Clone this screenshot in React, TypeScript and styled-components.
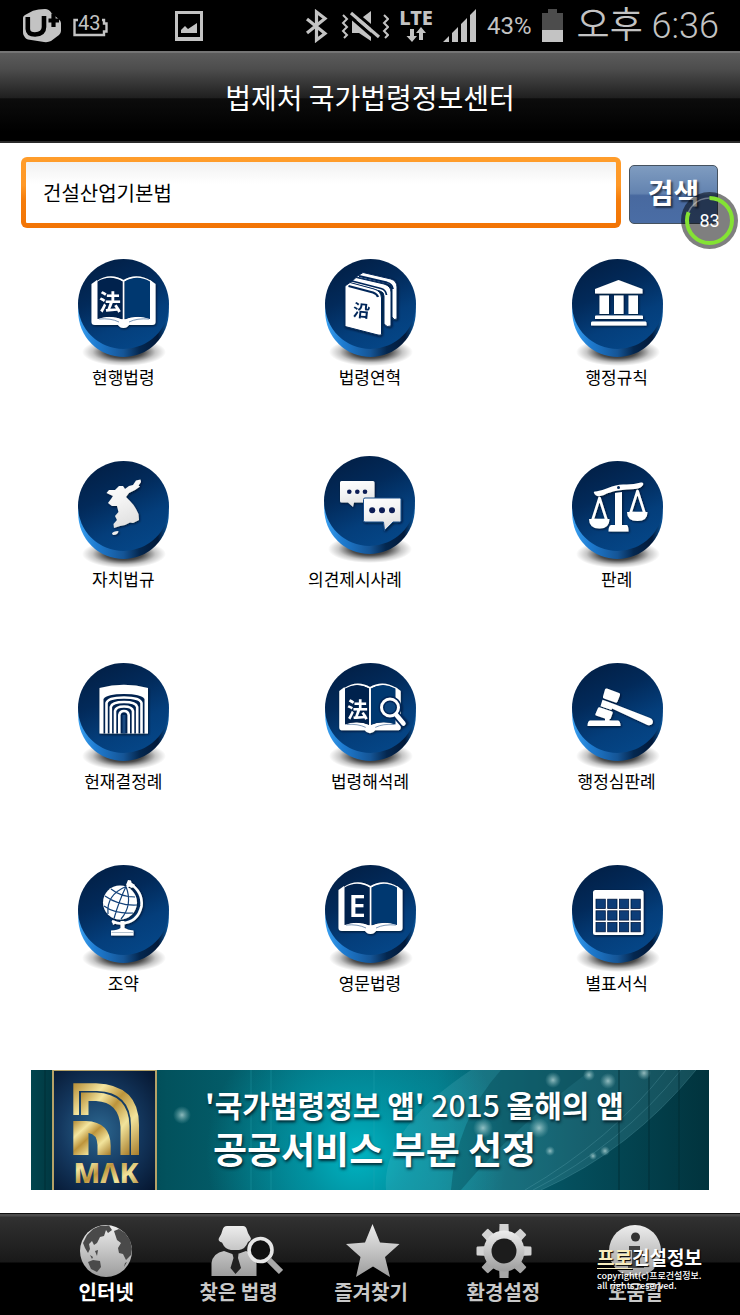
import React from 'react';
import styled, { createGlobalStyle } from 'styled-components';

const KR = '"Noto Sans CJK KR", sans-serif';

const GlobalStyle = createGlobalStyle`
  *, *::before, *::after { box-sizing: border-box; }
  body { margin: 0; background: #fff; font-family: ${KR}; color: #000; }
  button, input { font-family: inherit; }
  h1, ul, p { margin: 0; padding: 0; }
  ul { list-style: none; }
  svg { display: block; }
`;

const Page = styled.div`
  display: flex;
  flex-direction: column;
  min-height: 100vh;
`;

/* ---------- status bar ---------- */

const StatusBar = styled.div`
  display: flex;
  align-items: center;
  justify-content: space-between;
  height: 51px;
  padding: 0 21px 0 22px;
  background: #000;
  color: #c3c3c3;
`;

const StatusGroup = styled.div<{ $gap: number }>`
  display: flex;
  align-items: center;
  gap: ${(p) => p.$gap}px;
`;

const NetworkType = styled.div`
  display: flex;
  flex-direction: column;
  align-items: center;
  font: 800 20px/18px "Noto Sans", sans-serif;
`;

const StatusText = styled.span<{ $size: number }>`
  font-family: Roboto, ${KR};
  font-size: ${(p) => p.$size}px;
  font-weight: 400;
  line-height: 50px;
  white-space: nowrap;
`;

const Clock = styled(StatusText)`
  padding-left: 4px;
  font-weight: 350;
`;

/* ---------- title and search ---------- */

const TitleBar = styled.header`
  display: flex;
  align-items: center;
  justify-content: center;
  height: 92px;
  border-top: 2px solid #757575;
  border-bottom: 2px solid #2a2a2a;
  background: linear-gradient(#5b5b5b 0%, #4d4d4d 18%, #1f1f1f 51%, #0c0c0c 52%, #000 90%);
`;

const Title = styled.h1`
  color: #fff;
  font-size: 28px;
  line-height: 40px;
  font-weight: 400;
`;

const Main = styled.main`
  flex: 1;
  padding-bottom: 22px;
`;

const SearchForm = styled.form`
  position: relative;
  display: flex;
  align-items: center;
  gap: 8px;
  padding: 14px 22px 0 21px;
`;

const SearchInput = styled.input`
  flex: 1;
  min-width: 0;
  height: 71px;
  padding: 0 17px;
  border: 5px solid transparent;
  border-radius: 6px;
  outline: none;
  background:
    linear-gradient(#f1f1f1, #fff 36%) padding-box,
    linear-gradient(#ff9d2b, #ff9826 40%, #f57d0b 60%, #f27405) border-box;
  color: #000;
  font-size: 20px;
`;

const SearchButton = styled.button`
  width: 89px;
  height: 59px;
  margin-top: 3px;
  padding: 0 0 4px;
  border: 1px solid #45525f;
  border-radius: 5px;
  background: linear-gradient(#7f9cc0, #6383b0 48%, #48699f 52%, #4a6da5);
  color: #fff;
  font-size: 28px;
  font-weight: 700;
  line-height: 40px;
  text-shadow: 2px 2px 2px rgba(0, 0, 0, 0.55);
`;

const CleanerBadge = styled.div`
  position: absolute;
  top: 49px;
  right: 2px;
  width: 57px;
  height: 57px;
`;

/* ---------- menu ---------- */

const MenuGrid = styled.ul`
  display: grid;
  grid-template-columns: repeat(3, 1fr);
  row-gap: 70px;
  margin-top: 29px;
`;

const MenuItem = styled.li`
  display: flex;
  justify-content: center;
`;

const MenuButton = styled.button`
  display: flex;
  flex-direction: column;
  align-items: center;
  padding: 0;
  border: 0;
  background: none;
  color: #000;
`;

const MenuLabel = styled.span<{ $trailing?: boolean }>`
  padding-right: ${(p) => (p.$trailing ? '30px' : '0')};
  font-size: 17px;
  line-height: 24px;
  white-space: nowrap;
`;

/* ---------- banner ---------- */

const Banner = styled.a`
  position: relative;
  display: flex;
  align-items: center;
  height: 120px;
  margin: 75px 31px 0;
  padding-left: 21px;
  overflow: hidden;
  background:
    radial-gradient(ellipse 150px 150px at 48% 70%, #00b4c2 0%, rgba(0, 160, 175, 0.75) 35%, rgba(0, 120, 135, 0) 100%),
    linear-gradient(90deg, #01454e 0%, #01303a 5%, #02525d 20%, #046775 40%, #06707f 60%, #044e5c 80%, #01333d 100%);
  color: #fff;
  text-decoration: none;
`;

const BannerLights = styled.svg`
  position: absolute;
  top: 0;
  left: 0;
  width: 100%;
  height: 100%;
`;

const Award = styled.div`
  position: relative;
  flex: none;
  width: 105px;
  height: 120px;
  border: solid #b5a268;
  border-width: 1px 2px 0;
  background: radial-gradient(ellipse at 45% 50%, #2c6790 0%, #14385f 50%, #05152f 100%);
`;

const BannerText = styled.div`
  position: relative;
  padding: 0 0 8px 48px;
  font-weight: 700;
  white-space: nowrap;
  text-shadow: 1px 2px 3px rgba(0, 25, 35, 0.9);
`;

const BannerLine = styled.p<{ $large?: boolean }>`
  padding-left: ${(p) => (p.$large ? '8px' : '0')};
  font-size: ${(p) => (p.$large ? 37 : 30)}px;
  line-height: 44px;
`;

const Year = styled.span`
  font-weight: 500;
`;

/* ---------- tab bar ---------- */

const TabBar = styled.nav`
  position: relative;
  display: grid;
  grid-template-columns: repeat(5, 1fr);
  height: 102px;
  padding: 10px 38px 0 40px;
  border-top: 1px solid #111;
  background: linear-gradient(#4b4b4b 0, #4b4b4b 2px, #313131 3px, #191919 48px, #000 49px);
`;

const Tab = styled.a<{ $active?: boolean }>`
  display: flex;
  flex-direction: column;
  align-items: center;
  color: ${(p) => (p.$active ? '#fff' : '#c8c8c8')};
  font-size: 20px;
  font-weight: 700;
  line-height: 28px;
  text-decoration: none;
  white-space: nowrap;
`;

const Watermark = styled.div`
  position: absolute;
  top: 31px;
  right: 37px;
  width: 106px;
  color: #fff;
  white-space: nowrap;
`;

const WatermarkName = styled.p`
  padding-bottom: 2px;
  font-size: 19px;
  font-weight: 700;
  line-height: 24px;
  text-shadow: 1px 1px 1px #000;
`;

const WatermarkAccent = styled.span`
  color: #f8edbd;
  text-decoration: underline;
  text-decoration-thickness: 1px;
  text-underline-offset: 3px;
`;

const WatermarkNote = styled.p`
  font-size: 9px;
  font-weight: 500;
  line-height: 10px;
  text-shadow: 1px 1px 1px #000;
`;

/* ---------- drawings ---------- */

const LIGHT = '#c3c3c3';
const NAVY = '#03285a';

function Disc({ raised, children }: { raised?: boolean; children: React.ReactNode }) {
  return (
    <svg width="100" height="108" viewBox="0 0 100 108" overflow="visible" aria-hidden="true">
      <g transform={raised ? 'translate(-1 -5)' : undefined}>
        <ellipse cx="51" cy="95" rx="42" ry="14" fill="url(#discShadow)" />
        <ellipse cx="50.5" cy="54.5" rx="45.3" ry="45.5" fill="url(#discSide)" />
        <ellipse cx="50.5" cy="47" rx="45.5" ry="45" fill="url(#discFace)" />
      </g>
      <g filter="url(#glyphShadow)">{children}</g>
    </svg>
  );
}

function Book() {
  return (
    <>
      <path d="M24 25Q37 16 50.5 24V64Q37 58 24 63ZM50.5 24Q64 16 78 25V63Q64 58 50.5 64Z" fill="none" stroke="#fff" strokeWidth="2" />
      <path d="M24 23L18.5 27V65Q18.5 68 22 68H45Q47 71 50.5 71Q54 71 56 68H79Q82.5 68 82.5 65V27L77 23V62.500Q64 58 50.500 63.500Q37 58 24 62.500Z" fill="#fff" />
      <path d="M24.500 24.500Q37 17 49.500 24.500V62Q37 57.500 24.500 62Z" fill="#02214e" />
      <path d="M51.700 24.500Q64 17 77 24.500V62Q64 57.500 51.700 62Z" fill="#053770" />
      <path d="M26 62Q38 61 46 65M76 62Q64 61 56 65" fill="none" stroke="#5a7ca5" strokeWidth="0.800" />
    </>
  );
}

const glyphs: Record<string, React.ReactNode> = {
  law: (
    <>
      <Book />
      <text x="26" y="53" fontSize="22" fontWeight="700" fill="#fff">法</text>
    </>
  ),
  history: (
    <g stroke={NAVY} strokeWidth="1" strokeLinejoin="round">
      <path d="M36 20L43 15.500L71 22Q77 24 77 30V62Q74 64 72 60V32Q72 28 68 27Z" fill="#fff" />
      <path d="M30 26L36 20.500L64 27Q71 29 71 35V69Q67 71 64 67V39Q64 35 60 34Z" fill="#fff" />
      <path d="M32 24L61 31.500Q66 33 66.500 38M39 19L67 25.500Q72.500 27 73 32" stroke={NAVY} strokeWidth="1.800" fill="none" />
      <path d="M25 29L30 25.500L54 32Q61 34 61.500 41V77Q61 79 58 78L25 69.500Z" fill="#fff" />
      <path d="M28.500 29L53 35.500Q57 37 58 40" stroke={NAVY} strokeWidth="2.200" fill="none" />
      <text x="33" y="60" fontSize="17" fontWeight="700" fill={NAVY} stroke="none" transform="rotate(6 42 53)">沿</text>
    </g>
  ),
  bank: (
    <path fill="#fff" d="M51.500 23L75.500 32V36.500H28V32ZM32.500 38.500H42V57H32.500ZM47 38.500H56.500V57H47ZM61.500 38.500H71V57H61.500ZM29 58.500H75Q76 58.500 76 59.500V62H28V59.500Q28 58.500 29 58.500ZM25 64.500H78.500Q79.500 64.500 79.500 66V68.500H24V66Q24 64.500 25 64.500Z" />
  ),
  korea: (
    <>
      <path fill="url(#glyphFill)" d="M67.500 20.500L68 23L65.500 26.500L67 27.500L62 31L56 34L53 38L57 42L60.500 46L63 50L65.500 55L66 61L60 64L57 63.500L52 66L47 67L41 69L40.500 65L44 61L42 57L45.500 53L44 47L39 47L35 44L38 40L40 37L33.500 34L36 31L42 31L46 27L50 27L52 30L56 27L60 26L63 21.500Z" />
      <path fill="#eee" d="M39 74.500Q40 72 45.500 72Q45 76 40 76Z" />
    </>
  ),
  talk: (
    <>
      <path fill="url(#glyphFill)" d="M21.500 22H53Q54.500 22 54.500 23.500V43.500H34L33 48L28 43.500H21.500Q20 43.500 20 42V23.500Q20 22 21.500 22Z" />
      <path fill="url(#glyphFill)" stroke="#174c8a" strokeWidth="1" d="M45 39H79.500Q81 39 81 40.500V61.500Q81 63 79.500 63H73L64.500 71.500L63.500 63H45Q43.500 63 43.500 61.500V40.500Q43.500 39 45 39Z" />
      <g fill="#0a1d55">
        <circle cx="29.300" cy="32.700" r="2.300" />
        <circle cx="37.300" cy="32.700" r="2.300" />
        <circle cx="45" cy="32.700" r="2.300" />
        <circle cx="52.200" cy="51.300" r="3" />
        <circle cx="62" cy="51.300" r="3" />
        <circle cx="72" cy="51.300" r="3" />
      </g>
    </>
  ),
  scales: (
    <g transform="translate(1 0)">
      <path fill="#fff" d="M26 34Q25 32 28 32.500Q33 32 40 29Q49 25 57 25.500Q65 25.800 73 23.500Q76 23 75 26Q73 29.500 67 30Q58 30 50 31.500Q41 33 36 36Q28 39 26 34Z" />
      <circle cx="50.500" cy="28.500" r="1.500" fill={NAVY} />
      <path fill="#fff" d="M47 34L54 33V66H59Q60.500 67 60.500 72.500H40.500Q40.500 67 43 66H47Z" />
      <path fill="none" stroke="#fff" strokeWidth="2.600" strokeLinejoin="round" d="M31.500 39L24.500 61H38.500ZM69.500 32L62.500 54H76.500Z" />
      <path fill="#fff" d="M21 60H41.500Q41.500 69.500 31.500 69.500Q21 69.500 21 60ZM59 53H79.500Q79.500 62 69.500 62Q59 62 59 53Z" />
    </g>
  ),
  court: (
    <>
      <path fill="#fff" d="M26.500 27Q51 20.500 75 27V72.500H26.500Z" />
      <path fill="#02234f" d="M30.500 38Q34 33 51 33Q68 33 71.500 38V72.500H30.500Z" />
      <g fill="none" stroke="#fff" strokeWidth="2.600">
        <path d="M33.500 72.500V42Q35 36.500 51 36.500Q67 36.500 68.500 42V72.500" />
        <path d="M37.800 72.500V46Q39 41 51 41Q63 41 64.200 46V72.500" />
        <path d="M42 72.500V50Q43 45.500 51 45.500Q59 45.500 60 50V72.500" />
        <path d="M46.300 72.500V54Q47 50 51 50Q55 50 55.700 54V72.500" />
      </g>
      <path d="M51 72.500V54" stroke="#1d4b80" strokeWidth="3" />
    </>
  ),
  interpret: (
    <>
      <g transform="translate(1.500 4) scale(0.960 0.960)">
        <Book />
      </g>
      <text x="27" y="56" fontSize="21" fontWeight="700" fill="#fff">法</text>
      <path d="M70 47L85 64" stroke={NAVY} strokeWidth="8" />
      <circle cx="70" cy="46.500" r="8.500" fill="#0a447f" stroke={NAVY} strokeWidth="6" />
      <circle cx="70" cy="46.500" r="8.500" fill="none" stroke="#fff" strokeWidth="3" />
      <path d="M76 53.500L83.500 62.500" stroke="#fff" strokeWidth="4.500" strokeLinecap="round" />
    </>
  ),
  gavel: (
    <path transform="translate(1 0)" fill="#fff" d="M39 27.500L51 32Q52.500 32.700 52 34L49.500 40.500Q49 42 47.500 41.500L36 37.500Q34.500 37 35 35.500L37 28.500Q37.500 27 39 27.500ZM34.500 38.800L46 43L82 57Q86 59 84.500 62.500Q83 65 79.500 64L44 47.500L43.500 49L32.500 45.300ZM31.500 46.200L44 50.500Q45 51 44.700 52L42.500 58H41.500V59.500H50Q52.500 60 52.500 65H19.500Q19.500 60 22 59.500H37V57.500L28 54.500Q27 54 27.400 53L30 47Q30.500 46 31.500 46.200Z" />
  ),
  globe: (
    <>
      <path d="M57 20.500Q70 29 68.500 43Q65 59.500 48 60.500Q44 60.500 40 58.500M57 20.500L54 24" fill="none" stroke="#fff" strokeWidth="2.600" strokeLinecap="round" />
      <path d="M55 17L58 17.500L58.500 20L62 22L59 25L53 22ZM39 57L43 60L40 62Z" fill="#fff" />
      <circle cx="47" cy="39.500" r="17" fill="#fff" />
      <g fill="none" stroke="#12427a" strokeWidth="1.200">
        <path d="M53 23.500Q46 38 41 55.500M53 23.500Q33 32 35 51M53 23.500Q60 42 48 56M38 26Q48 34 62 34M32 33Q46 43 64 42M31 43Q42 51 60 50" />
      </g>
      <path fill="#fff" d="M47.500 58H51.500V65Q55 67 60.500 67.500V72.500H38V67.500Q45 67 47.500 65Z" />
      <path d="M38.500 69.500H60" stroke="#b5c2cf" strokeWidth="1" />
    </>
  ),
  english: (
    <>
      <Book />
      <text x="28.500" y="54" fontSize="31" fontWeight="600" fontFamily='"Noto Sans", sans-serif' fill="#fff">E</text>
    </>
  ),
  forms: (
    <g transform="translate(1 0)">
      <rect x="25" y="27" width="50.500" height="45" rx="2.500" fill="#fff" />
      {[36.2, 47.8, 59.5].map((y) =>
        [28, 39.7, 51.4, 63].map((x) => <rect key={`${x}-${y}`} x={x} y={y} width="9.300" height="9.300" fill="#0b3c78" stroke="#011a40" strokeWidth="0.800" />),
      )}
    </g>
  ),
};

function Defs() {
  return (
    <svg width="0" height="0" aria-hidden="true">
      <defs>
        <linearGradient id="discFace" x1="0.200" y1="0.050" x2="0.650" y2="1">
          <stop offset="0" stopColor="#022047" />
          <stop offset="0.350" stopColor="#022a5a" />
          <stop offset="0.700" stopColor="#043e7b" />
          <stop offset="1" stopColor="#054687" />
        </linearGradient>
        <linearGradient id="discSide">
          <stop offset="0" stopColor="#3aa0f0" />
          <stop offset="0.200" stopColor="#1e7bd0" />
          <stop offset="0.500" stopColor="#155596" />
          <stop offset="0.680" stopColor="#04274f" />
          <stop offset="0.880" stopColor="#021a3b" />
          <stop offset="1" stopColor="#0b59a0" />
        </linearGradient>
        <radialGradient id="discShadow">
          <stop offset="0" stopColor="#000" stopOpacity="0.950" />
          <stop offset="0.450" stopColor="#000" stopOpacity="0.700" />
          <stop offset="0.750" stopColor="#000" stopOpacity="0.220" />
          <stop offset="1" stopColor="#000" stopOpacity="0" />
        </radialGradient>
        <linearGradient id="glyphFill" x2="0.300" y2="1">
          <stop offset="0" stopColor="#fff" />
          <stop offset="0.500" stopColor="#f4f4f4" />
          <stop offset="1" stopColor="#e2e2e2" />
        </linearGradient>
        <filter id="glyphShadow" x="-20%" y="-20%" width="140%" height="140%">
          <feDropShadow dx="0.800" dy="1" stdDeviation="0.900" floodColor="#000c24" floodOpacity="0.800" />
        </filter>
        <linearGradient id="silver" x2="0" y2="1">
          <stop offset="0" stopColor="#ededed" />
          <stop offset="1" stopColor="#9c9c9c" />
        </linearGradient>
        <linearGradient id="gold" x2="1" y2="1">
          <stop offset="0" stopColor="#b58c35" />
          <stop offset="0.250" stopColor="#f4e6a0" />
          <stop offset="0.450" stopColor="#bd943b" />
          <stop offset="0.700" stopColor="#f2e49c" />
          <stop offset="1" stopColor="#a67c2b" />
        </linearGradient>
        <radialGradient id="spark">
          <stop offset="0" stopColor="#d8f0ee" stopOpacity="0.650" />
          <stop offset="1" stopColor="#9cc" stopOpacity="0" />
        </radialGradient>
      </defs>
    </svg>
  );
}

const CarrierIcon = () => (
  <svg width="40" height="34" viewBox="0 0 40 34" aria-hidden="true">
    <path fill={LIGHT} d="M1 9Q1 7 3 6L11 1.700Q16 0 23 0Q27 0 29.500 4L36 9.500Q39 12 39 14V22Q39 24 37 26L29 32Q26 33.500 22 33L6 30.500Q4 30 3 28.500L1.500 26Q1 25 1 23Z" />
    <path fill="none" stroke="#000" strokeWidth="4.600" d="M5.800 8V20Q6 25.500 13 25.500Q22 25 22 18V7" />
    <path stroke="#000" strokeWidth="4.200" d="M31.500 4.500V18M26.500 11.500H37" />
  </svg>
);

const SmallBattery = () => (
  <svg width="35" height="34" viewBox="0 -6 35 34" role="img" aria-label="43">
    <path fill="none" stroke={LIGHT} strokeWidth="2.400" d="M5 5H1.500V20H31V16.500H33.500V8.500H31V5H29" />
    <text x="5" y="15" fontSize="20" fontFamily="Roboto, sans-serif" fill={LIGHT}>43</text>
  </svg>
);

const PictureIcon = () => (
  <svg width="28" height="30" viewBox="0 0 28 30" aria-hidden="true">
    <path fill="none" stroke={LIGHT} strokeWidth="3" d="M1.500 1.500H26.500V27.500H1.500Z" />
    <path fill={LIGHT} d="M0 26H28V30H0ZM6 22V19L10 15L13 18L22 12V22Z" />
  </svg>
);

const BluetoothIcon = () => (
  <svg width="26" height="34" viewBox="0 0 26 34" aria-hidden="true">
    <path fill="none" stroke={LIGHT} strokeWidth="3.200" d="M2 10L20 24.500L11.500 31V3L20 9.500L2 24" />
  </svg>
);

const MuteIcon = () => (
  <svg width="48" height="34" viewBox="0 0 48 34" aria-hidden="true">
    <path fill={LIGHT} d="M11 11H18L30 2V32L18 24H11Z" />
    <path stroke="#000" strokeWidth="3" d="M6 5L36 31" />
    <path stroke="#000" strokeWidth="3" d="M13 2.500L41 26.500" />
    <path stroke={LIGHT} strokeWidth="3.200" d="M10 4L38 28" />
    <path fill="none" stroke={LIGHT} strokeWidth="2" d="M2 6L6 10L2 14L6 18L2 22L6 26L3 29M43 6L47 10L43 14L47 18L43 22L47 26L44 29" />
  </svg>
);

const DataArrows = () => (
  <svg width="22" height="15" viewBox="0 0 22 15" aria-hidden="true">
    <path fill={LIGHT} d="M5 2H9V9H12L7 15L1.500 9H5ZM16 0L21 6H18V13H14V6H11Z" />
  </svg>
);

const SignalIcon = () => (
  <svg width="34" height="34" viewBox="0 0 34 34" aria-hidden="true">
    <path fill={LIGHT} d="M0 33L6 27V33ZM9 33V24L15 18V33ZM18 33V15L24 9V33ZM27 33V6L33 0V33Z" />
  </svg>
);

const BatteryIcon = () => (
  <svg width="21" height="34" viewBox="0 0 21 34" aria-hidden="true">
    <path fill="#4c4c4c" d="M6 0H15V4H21V21H0V4H6Z" />
    <path fill={LIGHT} d="M0 21H21V33H0Z" />
  </svg>
);

const CleanerRing = () => (
  <svg width="57" height="57" viewBox="0 0 57 57" role="img" aria-label="83">
    <circle cx="28.500" cy="28.500" r="28.500" fill="#000" fillOpacity="0.500" />
    <circle cx="28.500" cy="28.500" r="22.500" fill="none" stroke="#fff" strokeOpacity="0.350" strokeWidth="1.500" />
    <circle cx="28.500" cy="28.500" r="22.500" fill="none" stroke="#84e333" strokeWidth="4" pathLength="100" strokeDasharray="81 100" transform="rotate(-90 28.500 28.500)" />
    <text x="28.500" y="35" textAnchor="middle" fontSize="18" fontFamily="Roboto, sans-serif" fill="#fff">83</text>
  </svg>
);

const AwardMark = () => (
  <svg width="101" height="119" viewBox="2 1 101 119" aria-hidden="true">
    <g fill="url(#gold)">
      <path d="M21.300 13.300H44Q87 15 87 55V85H79V56Q79 22 45 21H27V45H21.300Z" />
      <path d="M29 22.500H44Q77 24 77.500 56V85H68.500V57Q67 32 44 31H36.500V45H29Z" />
      <path d="M21.300 51H34Q58.700 52 58.700 76V85H45.500V75Q45 64 36.500 63V85H21.300Z" />
      <text x="54" y="113" textAnchor="middle" fontSize="28" fontWeight="800" fontFamily='"Noto Sans", sans-serif'>MΛK</text>
    </g>
  </svg>
);

const TabSvg = ({ children }: { children: React.ReactNode }) => (
  <svg width="88" height="54" viewBox="0 0 88 54" aria-hidden="true">
    {children}
  </svg>
);

const teeth = [0, 45, 90, 135, 180, 225, 270, 315];

const tabs = [
  {
    label: '인터넷',
    icon: (
      <>
        <circle cx="44" cy="27" r="26" fill="url(#silver)" />
        <path fill="#4a4a4a" d="M21 19L25 11L31 5L38 2L47 1.500L50 6L46 9L44 6L42 12L38 13L35 19L32 21L30 17L27 20L28 25L26 29L23 24ZM52 7L57 5L63 9L68 16L70 25L69 31L64 36L61 30L57 29L56 24L59 19L55 16ZM26 38L31 36L38 37L39 43L35 48L29 45ZM33 27L36 26L35 32ZM28 31L31 33L30 35ZM63 39L65 38L62 43Z" />
      </>
    ),
  },
  {
    label: '찾은 법령',
    icon: (
      <>
        <path fill="url(#silver)" d="M32 2H48Q51 2 52 6Q52.500 9 55.500 13.500Q57 16 53 18Q50 25.500 44 26H36Q30 25.500 27 18.500Q22.500 17 24 14Q27 9 27.500 6Q28.500 2 32 2ZM29 27L40 31L51 27Q61 30 61.500 40V52H16.500V39Q18 29 29 27Z" />
        <path fill="#222" d="M37.500 30H43.500L43 34L46 44L40.500 50L35.500 44L38.500 34Z" />
        <circle cx="65.500" cy="26" r="11.500" fill="#111" stroke="#e6e6e6" strokeWidth="3.600" />
        <path stroke="#a8a8a8" strokeWidth="6" d="M74 36L86 48" />
      </>
    ),
  },
  {
    label: '즐겨찾기',
    icon: <path fill="url(#silver)" d="M45.500 0L53 18.500L72.500 20L58 33L63 53L46 42.500L29 53L33.500 33L19 20L38 18.500Z" />,
  },
  {
    label: '환경설정',
    icon: (
      <>
        {teeth.map((a) => (
          <path key={a} d="M40.500 1Q40 -0.500 42 -0.500H48Q50 -0.500 49.500 1L50 12H40Z" transform={`rotate(${a} 45 27)`} fill={a > 90 && a < 270 ? '#a6a6a6' : '#d2d2d2'} />
        ))}
        <circle cx="45" cy="27" r="20.500" fill="url(#silver)" />
        <circle cx="45" cy="27" r="12.500" fill="#1c1c1c" />
      </>
    ),
  },
  {
    label: '도움말',
    icon: (
      <>
        <circle cx="43" cy="27" r="26" fill="url(#silver)" />
        <circle cx="43.500" cy="13" r="4.500" fill="#333" />
        <path fill="#444" d="M37 22H48V40H52V44H36V40H40V26H37Z" />
      </>
    ),
  },
];

const menu = [
  { label: '현행법령', glyph: 'law' },
  { label: '법령연혁', glyph: 'history' },
  { label: '행정규칙', glyph: 'bank' },
  { label: '자치법규', glyph: 'korea' },
  { label: '의견제시사례', glyph: 'talk', raised: true },
  { label: '판례', glyph: 'scales' },
  { label: '헌재결정례', glyph: 'court' },
  { label: '법령해석례', glyph: 'interpret' },
  { label: '행정심판례', glyph: 'gavel' },
  { label: '조약', glyph: 'globe' },
  { label: '영문법령', glyph: 'english' },
  { label: '별표서식', glyph: 'forms' },
];

export default function App() {
  return (
    <Page>
      <GlobalStyle />
      <StatusBar>
        <StatusGroup $gap={67}>
          <StatusGroup $gap={11}>
            <CarrierIcon />
            <SmallBattery />
          </StatusGroup>
          <PictureIcon />
        </StatusGroup>
        <StatusGroup $gap={10}>
          <BluetoothIcon />
          <MuteIcon />
          <NetworkType>
            LTE
            <DataArrows />
          </NetworkType>
          <SignalIcon />
          <StatusText $size={24}>43%</StatusText>
          <BatteryIcon />
          <Clock $size={36}>오후 6:36</Clock>
        </StatusGroup>
      </StatusBar>

      <TitleBar>
        <Title>법제처 국가법령정보센터</Title>
      </TitleBar>

      <Main>
        <SearchForm onSubmit={(e) => e.preventDefault()}>
          <SearchInput aria-label="법령 검색어" defaultValue="건설산업기본법" />
          <SearchButton type="submit">검색</SearchButton>
          <CleanerBadge>
            <CleanerRing />
          </CleanerBadge>
        </SearchForm>

        <MenuGrid>
          {menu.map((item) => (
            <MenuItem key={item.label}>
              <MenuButton type="button">
                <Disc raised={item.raised}>{glyphs[item.glyph]}</Disc>
                <MenuLabel $trailing={item.raised}>{item.label}</MenuLabel>
              </MenuButton>
            </MenuItem>
          ))}
        </MenuGrid>

        <Banner href="#award">
          <BannerLights viewBox="0 0 678 120" preserveAspectRatio="none" aria-hidden="true">
            <path fill="#7fd0d8" fillOpacity="0.160" d="M440 0H665Q600 80 510 120H355Q350 60 440 0Z" />
            <path fill="#01424e" fillOpacity="0.350" d="M470 0H560Q480 60 430 120H420Q425 50 470 0Z" />
            <g fill="none" stroke="#8fd5dc" strokeOpacity="0.180">
              <path d="M665 0Q600 80 510 120M650 0Q590 75 502 120M635 0Q580 70 494 120" />
            </g>
            <path stroke="#2aa9b5" strokeOpacity="0.350" d="M240 0V120M343 0V120M220 0V120" />
            <path stroke="#012a33" strokeOpacity="0.400" strokeWidth="2" d="M588 0V120M618 0V120M648 0V120M14 0V120" />
            <g fill="url(#spark)">
              <circle cx="151" cy="45" r="9" />
              <circle cx="522" cy="10" r="8" />
              <circle cx="558" cy="5" r="6" />
              <circle cx="577" cy="11" r="8" />
              <circle cx="613" cy="3" r="7" />
              <circle cx="452" cy="58" r="10" />
              <circle cx="508" cy="58" r="10" />
              <circle cx="519" cy="81" r="5" />
              <circle cx="574" cy="81" r="5" />
              <circle cx="562" cy="86" r="4" />
            </g>
          </BannerLights>
          <Award>
            <AwardMark />
          </Award>
          <BannerText>
            <BannerLine>
              '국가법령정보 앱' <Year>2015</Year> 올해의 앱
            </BannerLine>
            <BannerLine $large>공공서비스 부분 선정</BannerLine>
          </BannerText>
        </Banner>
      </Main>

      <TabBar>
        {tabs.map((tab, i) => (
          <Tab key={tab.label} href={`#tab-${i + 1}`} $active={i === 0}>
            <TabSvg>{tab.icon}</TabSvg>
            {tab.label}
          </Tab>
        ))}
        <Watermark>
          <WatermarkName>
            <WatermarkAccent>프로</WatermarkAccent>건설정보
          </WatermarkName>
          <WatermarkNote>copyright(c)프로건설정보.</WatermarkNote>
          <WatermarkNote>all rights reserved.</WatermarkNote>
        </Watermark>
      </TabBar>
      <Defs />
    </Page>
  );
}
